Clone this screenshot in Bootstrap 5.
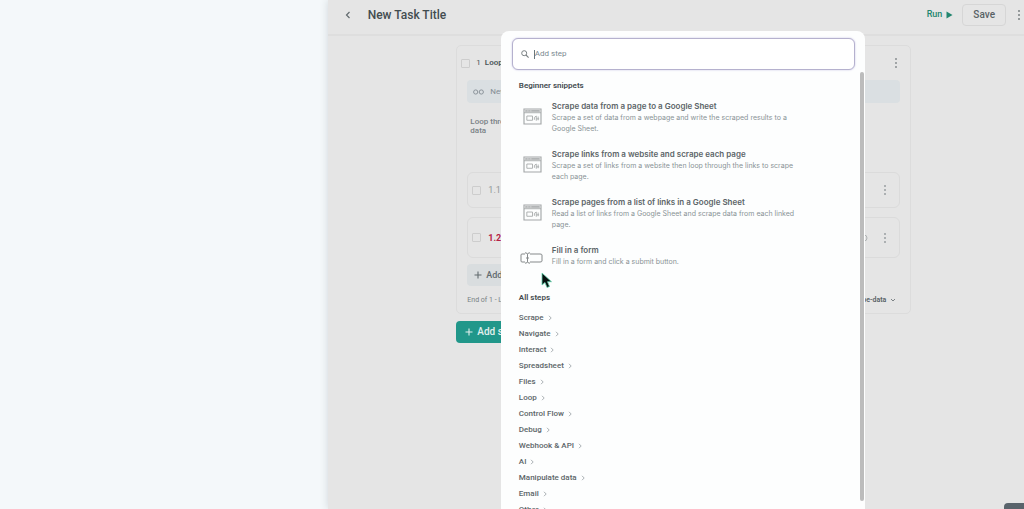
<!DOCTYPE html>
<html lang="en">
<head>
<meta charset="utf-8">
<meta name="viewport" content="width=device-width, initial-scale=1">
<title>New Task Title</title>
<link href="https://cdn.jsdelivr.net/npm/bootstrap@5.3.0/dist/css/bootstrap.min.css" rel="stylesheet">
<style>
body{font-family:Roboto,"Liberation Sans",sans-serif;font-size:8px;line-height:10px;background:#f4f8fa;color:#4b5559}
svg{display:block;flex:none}
.side{flex:0 0 32%}
.editor{background:#e5e5e5;box-shadow:0 0 8px #cfd6da;min-width:0}
.topbar{height:36px;border-bottom:2px solid #dedede;padding:0 2px 4px 16px}
.title{font-size:12px;line-height:16px;font-weight:500;color:#424c50}
.run{font-size:9px;font-weight:500;color:#23866f}
.save{font-size:10px;line-height:12px;font-weight:500;color:#596266;border:1px solid #d6d6d6;border-radius:4px;padding:4px 10px;margin-right:6px}
.flowcol{width:455px;max-width:100%;padding-top:9px}
.loopbox{border:1px solid #dcdcdc;border-radius:5px;padding:0 10px}
.loophead{height:34px;margin:0 -2px 0 -6px;gap:6px}
.loophead b{font-weight:600;margin-left:-2px}
.tick{appearance:none;width:9px;height:9px;border:1px solid #cdcdcd;border-radius:1px;background:transparent}
.loopbar{height:23px;background:#dadfe2;border-radius:4px;padding:0 6px;gap:6px;color:#838c93}
.looptext{height:46px;margin:14px 3px 0;line-height:9px;font-weight:500;color:#7a8285}
.item{height:36px;border:1px solid #dbdbdb;border-radius:6px;padding:0 8px 0 4px;margin-top:9px;color:#92989a;font-size:9px;gap:7px}
.item+.item{height:41px}
.warn{color:#b51f45}
.inner-add{background:#d9dddf;border-radius:4px;padding:6px 7px;margin-top:6px;color:#626b6f;font-size:9px;line-height:10px;font-weight:500}
.foot{height:27px;font-size:7px;color:#788083}
.foot b{color:#596266;font-weight:600}
.main-add{background:#21978a;color:#e3efed;border-radius:4px;padding:5px 9px;margin-top:7px;font-size:10px;line-height:12px;font-weight:500}
.inner-add:hover,.main-add:hover{background:#21978a}
.layer{inset:0;padding:31px 0 0 14px}
.picker{width:364px;max-width:100%;height:100%;background:#fdfefe;border-radius:8px 8px 0 0;overflow:hidden;padding:7px 10px 0 11px}
.search{height:32px;border:1px solid #b5b1ce;border-radius:6px;padding:0 8px;box-shadow:0 0 2px #c5c0e2;background:#fff}
.search input{font:8px/12px Roboto,"Liberation Sans",sans-serif;color:#68777d;border:0;outline:0;padding:0;background:transparent;min-width:0}
.search input::placeholder{color:#7b8a91;opacity:1}
.caret{width:1px;height:9px;background:#68777d;margin-left:5px}
.results{padding:10px 7px 0}
.results h2{font-size:8px;line-height:12px;font-weight:600;color:#444c50;margin:0}
.snippet{gap:9px;min-height:48px;color:#899396;text-decoration:none;font-family:Inter,Roboto,sans-serif}
.snippet .pic{width:24px;padding-top:8px}
.snippet strong{display:block;font-size:8px;line-height:12px;font-weight:600;color:#5c6568}
.snippet span{display:block;width:256px;font-size:7px;line-height:11px}
.steps{margin-top:6px}
.cat{font-size:8px;line-height:16px;font-weight:500;color:#5c6568;text-decoration:none;gap:3px}
.bar{right:1px;top:41px;width:4px;height:429px;border-radius:2px;background:#bcbcbc}
.pointer{left:40px;top:241px}
.chat{right:0;bottom:0;width:20px;height:6px;background:#59636b;border-radius:4px 0 0 0}
</style>
</head>
<body>
<svg width="0" height="0" class="position-absolute" aria-hidden="true">
<defs>
<symbol id="page" viewBox="0 0 20 18"><path d="M1 1h18v16H1z" fill="none" stroke="#a3a6a7" stroke-width="1.2"/><path d="M1.500 1.500h17v3h-17z" fill="#c6c8c9"/><path d="M1 5h18M3 3h1m2 0h1m2 0h8M4 8.500h6v4.500h-6zM12 12.500v-2.500l2-1.500v5m0-2h3m-1-2.500v4" fill="none" stroke="#a3a6a7" stroke-width=".9"/></symbol>
<symbol id="dots" viewBox="0 0 4 12"><circle cx="2" cy="2" r="1"/><circle cx="2" cy="6" r="1"/><circle cx="2" cy="10" r="1"/></symbol>
<symbol id="next" viewBox="0 0 6 6"><path d="M2 .8 4.200 3 2 5.200" fill="none" stroke="#a1a8ab" stroke-width=".9"/></symbol>
<symbol id="plus" viewBox="0 0 8 8"><path d="M4 .5v7M.5 4h7" fill="none" stroke="currentColor" stroke-width="1.1"/></symbol>
</defs>
</svg>
<div class="d-flex vh-100 overflow-hidden">
<aside class="side"></aside>
<main class="editor flex-grow-1 position-relative overflow-hidden">
<header class="topbar d-flex align-items-center">
<a href="#" aria-label="Back"><svg width="8" height="8" viewBox="0 0 8 8"><path d="M5.500 1 2.500 4l3 3" fill="none" stroke="#626b6e" stroke-width="1.200"/></svg></a>
<h1 class="title mb-0 ms-3 me-auto">New Task Title</h1>
<button class="btn run p-0 d-flex align-items-center gap-1 me-2">Run <svg width="7" height="8" viewBox="0 0 7 8"><path d="M.5.5 6.500 4 .5 7.500z" fill="#23866f"/></svg></button>
<button class="btn save">Save</button>
<button class="btn p-0" aria-label="Task menu"><svg width="4" height="12" fill="#7a8082" class="ms-1"><use href="#dots"/></svg></button>
</header>
<div class="d-flex justify-content-center ps-3">
<div class="flowcol">
<section class="loopbox">
<div class="loophead d-flex align-items-center"><input type="checkbox" class="tick m-0" aria-label="Select step 1"><span>1</span><b>Loop</b><svg width="4" height="12" fill="#888e90" class="ms-auto me-1"><use href="#dots"/></svg></div>
<div class="loopbar d-flex align-items-center"><svg width="11" height="6" viewBox="0 0 11 6"><circle cx="2.700" cy="3" r="2.100" fill="none" stroke="#8c949b"/><circle cx="8.300" cy="3" r="2.100" fill="none" stroke="#8c949b"/></svg>New</div>
<div class="looptext">Loop thro<br>data</div>
<div class="item d-flex align-items-center"><input type="checkbox" class="tick m-0" aria-label="Select step 1.1">1.1<svg width="4" height="12" fill="#999ea0" class="ms-auto me-1"><use href="#dots"/></svg></div>
<div class="item d-flex align-items-center"><input type="checkbox" class="tick m-0" aria-label="Select step 1.2"><b class="warn">1.2</b><svg width="6" height="8" viewBox="0 0 6 8" class="ms-auto me-1"><path d="M1 1h1a3 3 0 0 1 0 6H1" fill="none" stroke="#aeb2b3"/></svg><svg width="4" height="12" fill="#999ea0" class="me-1 ms-1"><use href="#dots"/></svg></div>
<button class="btn inner-add d-flex align-items-center gap-1 border-0"><svg width="8" height="8"><use href="#plus"/></svg>Add step</button>
<div class="foot d-flex align-items-center"><span>End of 1 - L</span><b class="ms-auto">scrape-data</b><svg width="6" height="6" viewBox="0 0 6 6" class="ms-1 me-1"><path d="m1 2 2 2 2-2" fill="none" stroke="#7b8285"/></svg></div>
</section>
<button class="btn main-add d-flex align-items-center gap-1 border-0"><svg width="8" height="8"><use href="#plus"/></svg>Add step</button>
</div>
</div>
<div class="layer position-absolute d-flex justify-content-center">
<div class="picker position-relative" role="dialog" aria-label="Add step">
<label class="search d-flex align-items-center"><svg width="8" height="8" viewBox="0 0 8 8"><circle cx="3.200" cy="3.200" r="2.500" fill="none" stroke="#7a8083"/><path d="m5 5 2.600 2.600" stroke="#7a8083" stroke-width="1.100"/></svg><i class="caret"></i><input class="flex-grow-1" placeholder="Add step" aria-label="Add step"></label>
<div class="results">
<h2 class="mb-2">Beginner snippets</h2>
<a href="#" class="snippet d-flex"><div class="pic ps-1"><svg width="19" height="17"><use href="#page"/></svg></div><div><strong>Scrape data from a page to a Google Sheet</strong><span>Scrape a set of data from a webpage and write the scraped results to a Google Sheet.</span></div></a>
<a href="#" class="snippet d-flex"><div class="pic ps-1"><svg width="19" height="17"><use href="#page"/></svg></div><div><strong>Scrape links from a website and scrape each page</strong><span>Scrape a set of links from a website then loop through the links to scrape each page.</span></div></a>
<a href="#" class="snippet d-flex"><div class="pic ps-1"><svg width="19" height="17"><use href="#page"/></svg></div><div><strong>Scrape pages from a list of links in a Google Sheet</strong><span>Read a list of links from a Google Sheet and scrape data from each linked page.</span></div></a>
<a href="#" class="snippet d-flex"><div class="pic pt-1"><svg width="24" height="12" viewBox="0 0 24 12" class="mt-1"><path d="M6 2H3q-1 0-1 1v6q0 1 1 1h3M11 2h10q2 0 2 1v6q0 1-2 1H11M6 .8q2.500 0 2.500 1.700v7q0 1.700-2.500 1.700M11 .8q-2.500 0-2.500 1.700v7q0 1.700 2.500 1.700M7 6h3" fill="none" stroke="#85898a"/></svg></div><div><strong>Fill in a form</strong><span>Fill in a form and click a submit button.</span></div></a>
<h2>All steps</h2>
<nav class="steps d-flex flex-column align-items-start" aria-label="All steps">
<a href="#" class="cat d-flex align-items-center">Scrape <svg width="6" height="6"><use href="#next"/></svg></a>
<a href="#" class="cat d-flex align-items-center">Navigate <svg width="6" height="6"><use href="#next"/></svg></a>
<a href="#" class="cat d-flex align-items-center">Interact <svg width="6" height="6"><use href="#next"/></svg></a>
<a href="#" class="cat d-flex align-items-center">Spreadsheet <svg width="6" height="6"><use href="#next"/></svg></a>
<a href="#" class="cat d-flex align-items-center">Files <svg width="6" height="6"><use href="#next"/></svg></a>
<a href="#" class="cat d-flex align-items-center">Loop <svg width="6" height="6"><use href="#next"/></svg></a>
<a href="#" class="cat d-flex align-items-center">Control Flow <svg width="6" height="6"><use href="#next"/></svg></a>
<a href="#" class="cat d-flex align-items-center">Debug <svg width="6" height="6"><use href="#next"/></svg></a>
<a href="#" class="cat d-flex align-items-center">Webhook &amp; API <svg width="6" height="6"><use href="#next"/></svg></a>
<a href="#" class="cat d-flex align-items-center">AI <svg width="6" height="6"><use href="#next"/></svg></a>
<a href="#" class="cat d-flex align-items-center">Manipulate data <svg width="6" height="6"><use href="#next"/></svg></a>
<a href="#" class="cat d-flex align-items-center">Email <svg width="6" height="6"><use href="#next"/></svg></a>
<a href="#" class="cat d-flex align-items-center">Other <svg width="6" height="6"><use href="#next"/></svg></a>
</nav>
</div>
<div class="bar position-absolute"></div>
<svg class="pointer position-absolute" width="12" height="17" viewBox="0 0 12 17"><path d="M1 1v12l3-2.500 2 5 2.500-1-2-4.800h4z" fill="#07110f" stroke="#64d3ae" stroke-width=".8"/></svg>
</div>
</div>
<div class="chat position-absolute"></div>
</main>
</div>
<script src="https://cdn.jsdelivr.net/npm/bootstrap@5.3.0/dist/js/bootstrap.bundle.min.js"></script>
</body>
</html>
